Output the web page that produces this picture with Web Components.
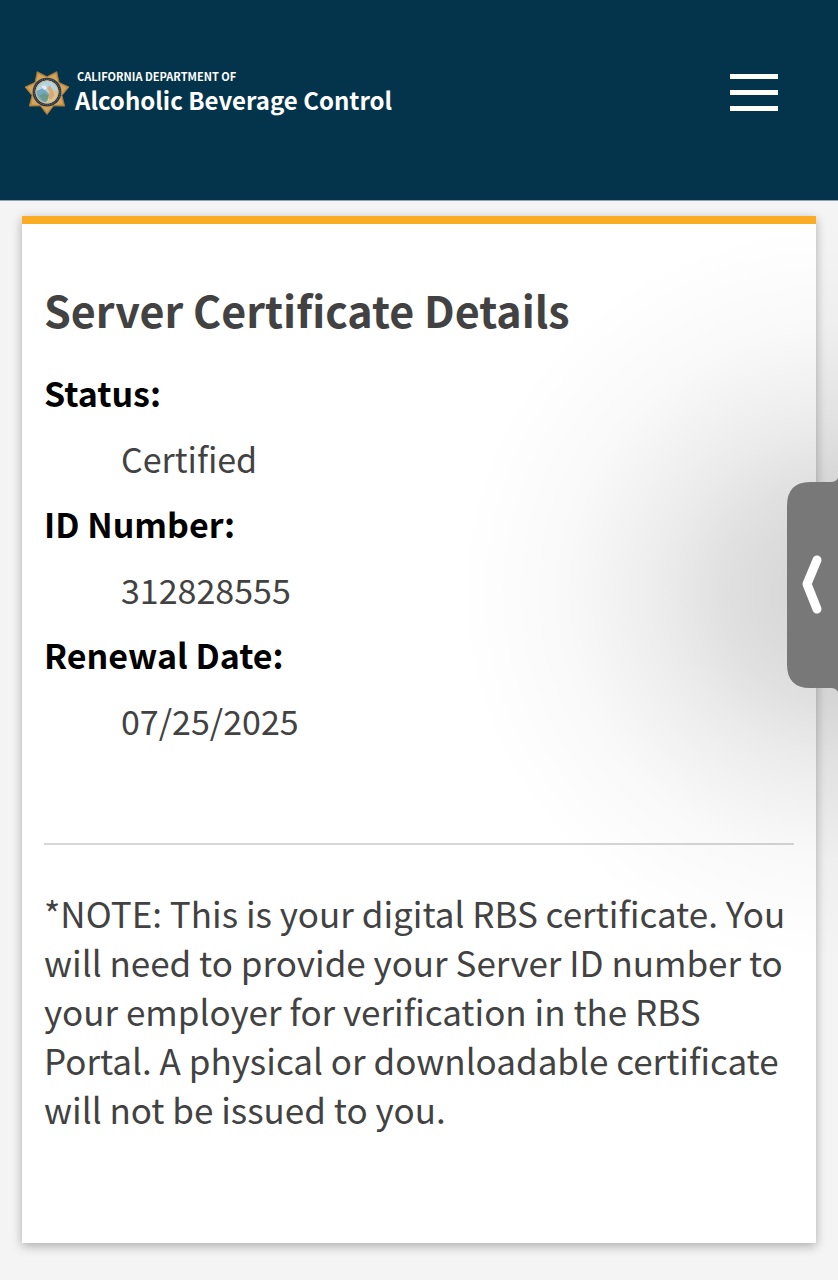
<!DOCTYPE html>
<html lang="en">
<head>
<meta charset="utf-8">
<meta name="viewport" content="width=device-width, initial-scale=1">
<title>Server Certificate Details</title>
<style>
  body {
    margin: 0;
    position: relative;
    min-height: 100vh;
    overflow-x: hidden;
    background: #f4f4f4;
    color: #424242;
    font-family: "Source Sans Pro", "Noto Sans CJK SC", "Noto Sans", sans-serif;
    font-size: 34px;
    line-height: 49px;
  }
</style>
</head>
<body>
<site-header>
  <span slot="agency">CALIFORNIA DEPARTMENT OF</span>
  Alcoholic Beverage Control
</site-header>
<main>
  <certificate-card>
    <span slot="title">Server Certificate Details</span>
    <detail-item label="Status:">Certified</detail-item>
    <detail-item label="ID Number:">312828555</detail-item>
    <detail-item label="Renewal Date:">07/25/2025</detail-item>
    <span slot="note">*NOTE: This is your digital RBS certificate. You will need to provide your Server ID number to your employer for verification in the RBS Portal. A physical or downloadable certificate will not be issued to you.</span>
  </certificate-card>
</main>
<side-tab></side-tab>

<script>
class StarBadge extends HTMLElement {
  constructor() {
    super();
    this.attachShadow({ mode: "open" });
  }

  connectedCallback() {
    this.shadowRoot.innerHTML = `
      <style>
        :host { display: block; flex: none; width: 46px; height: 46px; }
        svg { display: block; width: 100%; height: 100%; }
      </style>
      <svg viewBox="-24 -24 48 48" aria-hidden="true">
        <polygon points="${this.#starPoints(23.5, 16)}" fill="#c4914a" stroke="#a8793b" stroke-width="1"/>
        <polygon points="${this.#starPoints(20.5, 15)}" fill="#d3a45c"/>
        <circle r="15" fill="#2a3443"/>
        <circle r="13.5" fill="none" stroke="#7d7a6d" stroke-width="1" stroke-dasharray="1 1"/>
        <circle r="12" fill="#d9c690"/>
        <path d="M-11-1A11 11 0 0 1 11-1L5-3L1 0L-4-3Z" fill="#b4d3e3"/>
        <path d="M-11-1L-4-4L0 0L3 3L-1 11A11 11 0 0 1-11-1Z" fill="#6fa7c4"/>
        <path d="M-8 4L-3 1L2 4L0 9L-4 9Z" fill="#6c9a86"/>
        <path d="M3-7L6-2L8 4L4 8L1 6L3 0L0-4Z" fill="#d9a878"/>
        <path d="M-6-6L-2-7L0-4L-3-2Z" fill="#e7edf0"/>
        <circle r="11.5" fill="none" stroke="#c9bd95" stroke-width="1"/>
      </svg>`;
  }

  // seven points, one of them straight down
  #starPoints(outer, inner) {
    return Array.from({ length: 14 }, (_, i) => {
      const radius = i % 2 ? inner : outer;
      const angle = Math.PI / 2 + (i * Math.PI) / 7;
      return `${(radius * Math.cos(angle)).toFixed(1)},${(radius * Math.sin(angle)).toFixed(1)}`;
    }).join(" ");
  }
}

class SiteHeader extends HTMLElement {
  constructor() {
    super();
    this.attachShadow({ mode: "open" });
  }

  connectedCallback() {
    this.shadowRoot.innerHTML = `
      <style>
        :host { display: block; }
        header {
          display: flex;
          align-items: center;
          justify-content: space-between;
          padding: 68px 60px 84px 24px;
          background: #03344b;
          border-bottom: 1px solid #8fa3ad;
          color: #fff;
        }
        a {
          display: flex;
          align-items: center;
          gap: 5px;
          color: inherit;
          text-decoration: none;
        }
        .brand { display: flex; flex-direction: column; }
        .agency { padding-left: 2px; font-size: 11px; line-height: 16px; font-weight: 700; }
        .name { font-size: 24px; line-height: 32px; font-weight: 700; }
        button {
          display: flex;
          flex-direction: column;
          gap: 11px;
          padding: 0;
          border: 0;
          background: none;
          cursor: pointer;
        }
        .bar { width: 48px; height: 5px; background: #fff; }
      </style>
      <header>
        <a href="#">
          <star-badge></star-badge>
          <span class="brand">
            <span class="agency"><slot name="agency"></slot></span>
            <span class="name"><slot></slot></span>
          </span>
        </a>
        <button type="button" aria-label="Menu">
          <span class="bar"></span>
          <span class="bar"></span>
          <span class="bar"></span>
        </button>
      </header>`;
  }
}

class CertificateCard extends HTMLElement {
  constructor() {
    super();
    this.attachShadow({ mode: "open" });
  }

  connectedCallback() {
    this.shadowRoot.innerHTML = `
      <style>
        :host {
          display: block;
          margin: 15px 22px 36px;
          padding: 53px 22px 110px;
          border-top: 8px solid #faac25;
          background: #fff;
          box-shadow: 0 3px 10px rgba(0, 0, 0, .3);
        }
        h1 { margin: 0 0 27px; font-size: 43px; line-height: 64px; font-weight: 700; }
        hr { margin: 98px 0 43px; border: 0; border-top: 2px solid #d6d6d6; }
        p { margin: 0; font-size: 35px; }
      </style>
      <h1><slot name="title"></slot></h1>
      <slot></slot>
      <hr>
      <p><slot name="note"></slot></p>`;
  }
}

class DetailItem extends HTMLElement {
  constructor() {
    super();
    this.attachShadow({ mode: "open" });
  }

  connectedCallback() {
    this.shadowRoot.innerHTML = `
      <style>
        :host { display: block; margin-bottom: 16px; }
        dl { margin: 0; }
        dt { margin-bottom: 17px; color: #000; font-weight: 700; }
        dd { margin: 0 0 0 77px; }
      </style>
      <dl>
        <dt></dt>
        <dd><slot></slot></dd>
      </dl>`;
    this.shadowRoot.querySelector("dt").textContent = this.getAttribute("label");
  }
}

class SideTab extends HTMLElement {
  constructor() {
    super();
    this.attachShadow({ mode: "open" });
  }

  connectedCallback() {
    this.shadowRoot.innerHTML = `
      <style>
        /* floats over the page, pinned to the right edge */
        :host {
          position: absolute;
          top: 205px;
          right: 0;
          display: flex;
          align-items: center;
          justify-content: flex-end;
          width: 380px;
          height: 760px;
          pointer-events: none;
          background: radial-gradient(ellipse 380px 370px at 100% 51%,
            rgba(0, 0, 0, .18) 0%, rgba(0, 0, 0, .15) 15%, rgba(0, 0, 0, .12) 30%,
            rgba(0, 0, 0, .08) 45%, rgba(0, 0, 0, .05) 58%, rgba(0, 0, 0, .025) 72%,
            rgba(0, 0, 0, .01) 86%, rgba(0, 0, 0, 0) 100%);
        }
        button {
          padding: 0;
          border: 0;
          background: none;
          cursor: pointer;
          pointer-events: auto;
        }
        svg { display: block; }
      </style>
      <button type="button" aria-label="Open panel">
        <svg width="52" height="214" viewBox="0 0 52 214" aria-hidden="true">
          <path d="M52 0Q50 4 45 4H24Q1 4 1 28V186Q1 210 24 210H45Q50 210 52 214Z" fill="#787878"/>
          <path d="M31 82L21 106L31 131" fill="none" stroke="#fff" stroke-width="9" stroke-linecap="round" stroke-linejoin="round"/>
        </svg>
      </button>`;
  }
}

customElements.define("star-badge", StarBadge);
customElements.define("site-header", SiteHeader);
customElements.define("certificate-card", CertificateCard);
customElements.define("detail-item", DetailItem);
customElements.define("side-tab", SideTab);
</script>
</body>
</html>
